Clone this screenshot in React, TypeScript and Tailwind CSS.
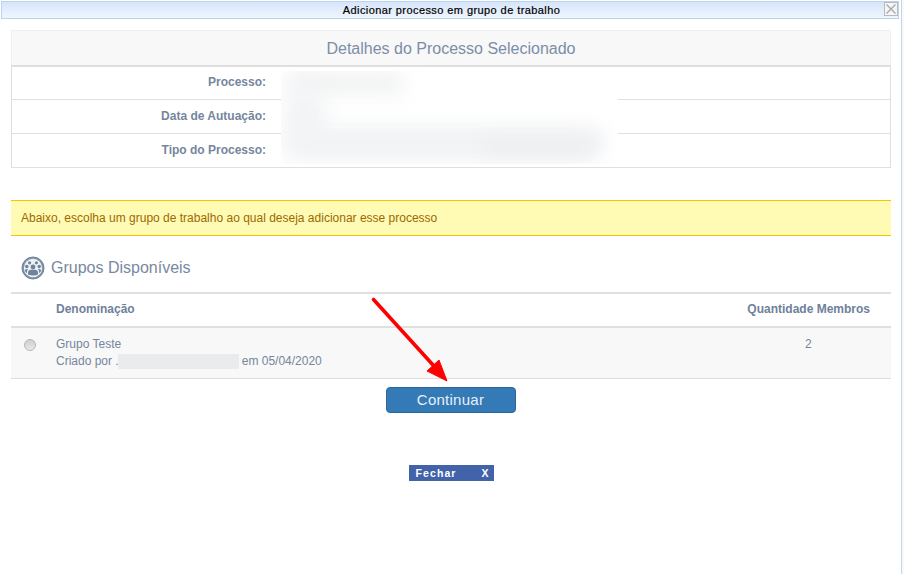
const font = "font-['Liberation_Sans',Arial,sans-serif]";

const detailRows = ["Processo:", "Data de Autuação:", "Tipo do Processo:"];

const GroupsIcon = () => (
  <svg width="24" height="24" viewBox="0 0 24 24" className="shrink-0">
    <circle cx="12" cy="12" r="11" fill="#7f92a9" stroke="#6f839b" strokeWidth="1" />
    <circle cx="12" cy="12" r="9.2" fill="#eef1f4" />
    <circle cx="5.8" cy="10.5" r="1.7" fill="#6f839b" />
    <circle cx="18.2" cy="10.5" r="1.7" fill="#6f839b" />
    <circle cx="8.6" cy="6.8" r="1.6" fill="#6f839b" />
    <circle cx="15.4" cy="6.8" r="1.6" fill="#6f839b" />
    <circle cx="12" cy="11" r="2.4" fill="#6f839b" />
    <path d="M7 18.5v-2.2c0-1.6 1.4-2.6 3-2.6h4c1.600 0 3 1 3 2.600v2.200c-3 1.300-7 1.300-10 0z" fill="#6f839b" />
    <path d="M3.800 15c.2-1.300 1-2 2.200-2h1.200l-1.200 1.500v2.800z" fill="#6f839b" />
    <path d="M20.200 15c-.2-1.300-1-2-2.200-2h-1.200l1.200 1.500v2.800z" fill="#6f839b" />
  </svg>
);

const CloseIcon = () => (
  <svg width="14" height="14" viewBox="0 0 14 14">
    <rect x="0.5" y="0.5" width="13" height="13" fill="#f4f6f8" stroke="#b9b9b9" />
    <path d="M2.500 2.500L11.500 11.500M11.500 2.500L2.500 11.500" stroke="#a8a8a8" strokeWidth="1.400" />
  </svg>
);

const Arrow = () => (
  <svg width="90" height="95" viewBox="0 0 90 95" className="absolute left-[365px] top-[292px]">
    <path d="M8.500 7.500L68 73" stroke="#fe0000" strokeWidth="3.600" strokeLinecap="round" />
    <path d="M82 89L62 79L74 68Z" fill="#fe0000" stroke="#fe0000" strokeWidth="1" strokeLinejoin="round" />
  </svg>
);

// redaction blur over the process details
const BlurredValues = () => (
  <div className="absolute left-[281px] top-[71px] h-[93px] w-[337px] overflow-hidden bg-white">
    <div className="absolute left-[4px] top-[0px] h-[24px] w-[120px] rounded-full bg-[#f2f3f4] blur-[9px]" />
    <div className="absolute left-[4px] top-[12px] h-[60px] w-[40px] rounded-full bg-[#f3f4f5] blur-[9px]" />
    <div className="absolute left-[0px] top-[54px] h-[36px] w-[325px] rounded-full bg-[#f2f3f5] blur-[9px]" />
    <div className="absolute left-[200px] top-[68px] h-[16px] w-[110px] rounded-full bg-[#edeef0] blur-[8px]" />
  </div>
);

export default function App() {
  return (
    <div className={`${font} relative h-[574px] w-[904px] overflow-hidden bg-white`}>
      <div className="absolute right-0 top-0 h-full w-[3px] border-l border-[#c3d5e9] bg-[#f7f9fb]" />

      <div className="relative mx-px mt-px flex h-[18px] w-[898px] items-center justify-center border border-[#bcd3f0] bg-gradient-to-b from-[#d6e5fa] to-[#f0f5fd] pl-[3px] text-[11px] font-normal leading-none tracking-[0.42px] text-black [-webkit-text-stroke:0.2px_black]">
        Adicionar processo em grupo de trabalho
        <span className="absolute right-0 top-0 flex">
          <CloseIcon />
        </span>
      </div>

      <div className="mx-[11px] mt-[11px] w-[880px]">
        <div className="flex h-[35px] items-center justify-center border border-b-0 border-[#efefef] bg-[#f8f8f8] pt-[2px] text-[16px] text-[#7c8ea6]">
          Detalhes do Processo Selecionado
        </div>
        <div className="border-x border-b border-t-2 border-[#dfdfdf]">
          {detailRows.map((label, i) => (
            <div
              key={label}
              className={`flex items-center justify-end ${i > 0 ? "h-[34px] border-t border-[#dfdfdf] pb-[1px]" : "h-[32px] pb-[2px]"}`}
            >
              <span className="mr-[624px] text-[12px] font-bold text-[#75869d]">{label}</span>
            </div>
          ))}
        </div>

        <div className="mt-[32px] flex h-[36px] items-center border-y border-[#f8c300] bg-[#fffbb5] pl-[10px] text-[12px] text-[#9a6a00]">
          Abaixo, escolha um grupo de trabalho ao qual deseja adicionar esse processo
        </div>

        <div className="mt-[20px] flex h-[24px] items-center gap-[6px] pl-[10px] text-[16px] text-[#78899f]">
          <GroupsIcon />
          Grupos Disponíveis
        </div>

        <div className="mt-[12px] flex h-[36px] items-center justify-between border-y-2 border-[#e0e0e0] pb-[2px] pl-[45px] pr-[21px] text-[12px] font-bold text-[#6f819a]">
          <span>Denominação</span>
          <span>Quantidade Membros</span>
        </div>
        <div className="relative h-[51px] border-b border-[#dddddd] bg-[#f8f8f8] pl-[45px] pt-[8px] text-[12px] leading-[17px] text-[#75869d]">
          <span className="absolute left-[13px] top-[11px] h-[12px] w-[12px] rounded-full border border-[#b5b5b5] bg-gradient-to-b from-[#cfcfcf] to-[#e9e9e9]" />
          <div>Grupo Teste</div>
          <div className="flex items-center">
            Criado por .
            <span className="ml-[-1px] mr-[3px] h-[15px] w-[121px] bg-[#eaebed]" />
            em 05/04/2020
          </div>
          <span className="absolute left-[794px] top-[8px]">2</span>
        </div>

        <div className="mt-[8px] flex justify-center">
          <button className="ml-[-1px] h-[26px] w-[130px] rounded-[4px] border border-[#2b6699] bg-[#337ab7] pb-[2px] text-[15px] leading-none tracking-[0.25px] text-[#e8f0f7]">
            Continuar
          </button>
        </div>

        <div className="mt-[52px] flex justify-center">
          <div className="flex h-[16px] w-[85px] items-center justify-between bg-[#4263aa] pl-[7px] pr-[4px] pt-[1px] text-[10.5px] font-bold tracking-[1.100px] text-white">
            <span>Fechar</span>
            <span>X</span>
          </div>
        </div>
      </div>

      <BlurredValues />
      <Arrow />
    </div>
  );
}
